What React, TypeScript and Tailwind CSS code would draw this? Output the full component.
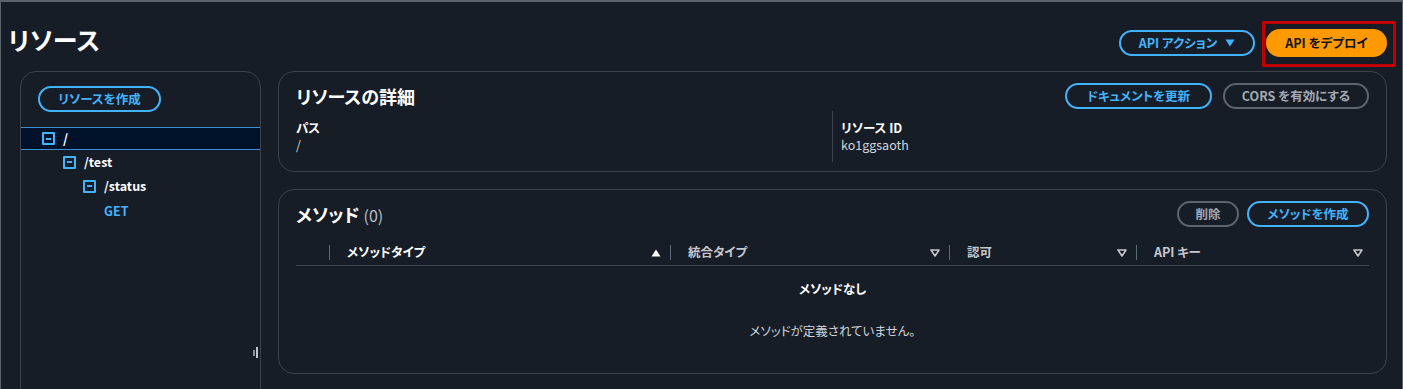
import React from "react";

const Minus = () => (
  <span className="inline-flex h-[13px] w-[13px] items-center justify-center border-2 border-[#42b4ff] rounded-[1px]">
    <span className="block h-[2px] w-[5px] bg-[#42b4ff]" />
  </span>
);

const Up = () => (
  <svg width="10" height="8" viewBox="0 0 10 8">
    <path d="M5 0.5 L9.5 7.5 L0.5 7.5 Z" fill="#ffffff" />
  </svg>
);

const Down = () => (
  <svg width="10" height="8" viewBox="0 0 10 8">
    <path d="M1 1 L9 1 L5 7 Z" fill="none" stroke="#c6c6cd" strokeWidth="1.6" strokeLinejoin="round" />
  </svg>
);

const BlueBtn = ({ children, cls = "" }: { children: React.ReactNode; cls?: string }) => (
  <button className={`h-[26px] rounded-full border-2 border-[#42b4ff] text-[#42b4ff] text-[12.5px] font-bold px-[14px] leading-none flex items-center ${cls}`}>
    {children}
  </button>
);

const GrayBtn = ({ children, cls = "" }: { children: React.ReactNode; cls?: string }) => (
  <button className={`h-[26px] rounded-full border-2 border-[#5f646c] text-[#a4aab2] text-[12.5px] font-bold px-[14px] leading-none flex items-center ${cls}`}>
    {children}
  </button>
);

const Divider = () => <span className="block h-[15px] w-px bg-[#5f6b7a]" />;

export default function App() {
  return (
    <div className="w-[1403px] h-[389px] overflow-hidden bg-[#161d26] border-t-2 border-l border-r border-[#5c636c] font-['Noto_Sans_CJK_JP','Noto_Sans',sans-serif] [font-feature-settings:'palt'] text-[#d1d5db]">
      {/* header */}
      <div className="mt-[19px] h-[40px] flex items-center justify-between pl-[7px] pr-[15px]">
        <h1 className="text-[25px] font-bold text-white leading-none -mt-[3px] tracking-[0.5px]">リソース</h1>
        <div className="flex items-center gap-[11px] mt-[4px]">
          <BlueBtn cls="h-[26px] w-[136px] justify-center gap-[8px]">
            <span>API アクション</span>
            <svg width="10" height="8" viewBox="0 0 10 8">
              <path d="M0.5 0.5 L9.5 0.5 L5 7.5 Z" fill="#42b4ff" />
            </svg>
          </BlueBtn>
          <div className="relative">
            <button className="h-[28px] w-[121px] rounded-full bg-[#ff9900] text-[#0f141a] text-[12.5px] font-bold leading-none flex items-center justify-center">
              API をデプロイ
            </button>
            <span className="absolute -top-[8px] -bottom-[10px] -left-[4px] -right-[9px] border-[3px] border-[#c00000]" />
          </div>
        </div>
      </div>

      {/* content */}
      <div className="mt-[10px] flex gap-[17px] pl-[19px] pr-[15px]">
        {/* left panel */}
        <div className="relative w-[241px] h-[340px] shrink-0 rounded-tl-[16px] rounded-tr-[16px] border border-[#3b424c] pt-[14px]">
          <div className="pl-[17px]">
            <BlueBtn cls="w-[123px] justify-center">リソースを作成</BlueBtn>
          </div>
          <div className="mt-[15px] text-[12.5px] font-bold">
            <div className="h-[23px] flex items-center gap-[8px] pl-[21px] bg-[#00122a] border-y border-[#3d8fd6] text-white">
              <Minus />
              <span className="text-[13px]">/</span>
            </div>
            <div className="h-[24px] flex items-center gap-[8px] pl-[42px] text-white">
              <Minus />
              <span>/test</span>
            </div>
            <div className="h-[24px] flex items-center gap-[8px] pl-[62px] text-white">
              <Minus />
              <span>/status</span>
            </div>
            <div className="h-[26px] flex items-center pl-[83px] text-[#42b4ff]">GET</div>
          </div>
          <span className="absolute left-[232px] top-[278px] h-[6px] w-[2px] bg-[#8a9099]" />
          <span className="absolute left-[235px] top-[275px] h-[11px] w-[2px] bg-[#c0c4ca]" />
        </div>

        {/* right column */}
        <div className="flex-1 flex flex-col gap-[17px]">
          {/* details card */}
          <div className="h-[101px] rounded-[16px] border border-[#3b424c] px-[17px] pt-[11px]">
            <div className="flex items-center justify-between h-[26px]">
              <h2 className="text-[18px] font-bold text-white leading-none">リソースの詳細</h2>
              <div className="flex gap-[11px]">
                <BlueBtn cls="w-[147px] justify-center">ドキュメントを更新</BlueBtn>
                <GrayBtn cls="w-[146px] justify-center">CORS を有効にする</GrayBtn>
              </div>
            </div>
            <div className="mt-[2px] flex">
              <div className="w-[536px] pt-[8px] text-[12.5px]">
                <div className="font-bold text-white leading-[17px]">パス</div>
                <div className="leading-[17px] text-[#d1d5db]">/</div>
              </div>
              <div className="h-[51px] w-px bg-[#3b424c]" />
              <div className="pl-[8px] pt-[8px] text-[12.5px]">
                <div className="font-bold text-white leading-[17px]">リソース ID</div>
                <div className="leading-[17px] text-[#d1d5db]">ko1ggsaoth</div>
              </div>
            </div>
          </div>

          {/* methods card */}
          <div className="h-[185px] rounded-[16px] border border-[#3b424c] px-[17px] pt-[11px]">
            <div className="flex items-center justify-between h-[26px]">
              <h2 className="text-[18px] font-bold text-white leading-none">
                メソッド <span className="font-normal text-[16px] text-[#b6bec9]">(0)</span>
              </h2>
              <div className="flex gap-[8px]">
                <GrayBtn cls="w-[62px] justify-center">削除</GrayBtn>
                <BlueBtn cls="w-[122px] justify-center">メソッドを作成</BlueBtn>
              </div>
            </div>
            <div className="mt-[13px] h-[26px] flex items-center border-b border-[#414953] text-[12.5px] font-bold">
              <div className="w-[34px] flex justify-end"><Divider /></div>
              <div className="w-[340px] flex items-center justify-between pl-[17px] pr-[9px] text-white">
                <span>メソッドタイプ</span>
                <Up />
              </div>
              <Divider />
              <div className="w-[278px] flex items-center justify-between pl-[17px] pr-[9px] text-[#c6c6cd]">
                <span>統合タイプ</span>
                <Down />
              </div>
              <Divider />
              <div className="w-[186px] flex items-center justify-between pl-[17px] pr-[9px] text-[#c6c6cd]">
                <span>認可</span>
                <Down />
              </div>
              <Divider />
              <div className="flex-1 flex items-center justify-between pl-[17px] pr-[6px] text-[#c6c6cd]">
                <span>API キー</span>
                <Down />
              </div>
            </div>
            <div className="text-center text-[12.5px]">
              <div className="mt-[14px] font-bold text-white leading-[17px]">メソッドなし</div>
              <div className="mt-[25px] text-[#d1d5db] leading-[17px]">メソッドが定義されていません。</div>
            </div>
          </div>
        </div>
      </div>
    </div>
  );
}
